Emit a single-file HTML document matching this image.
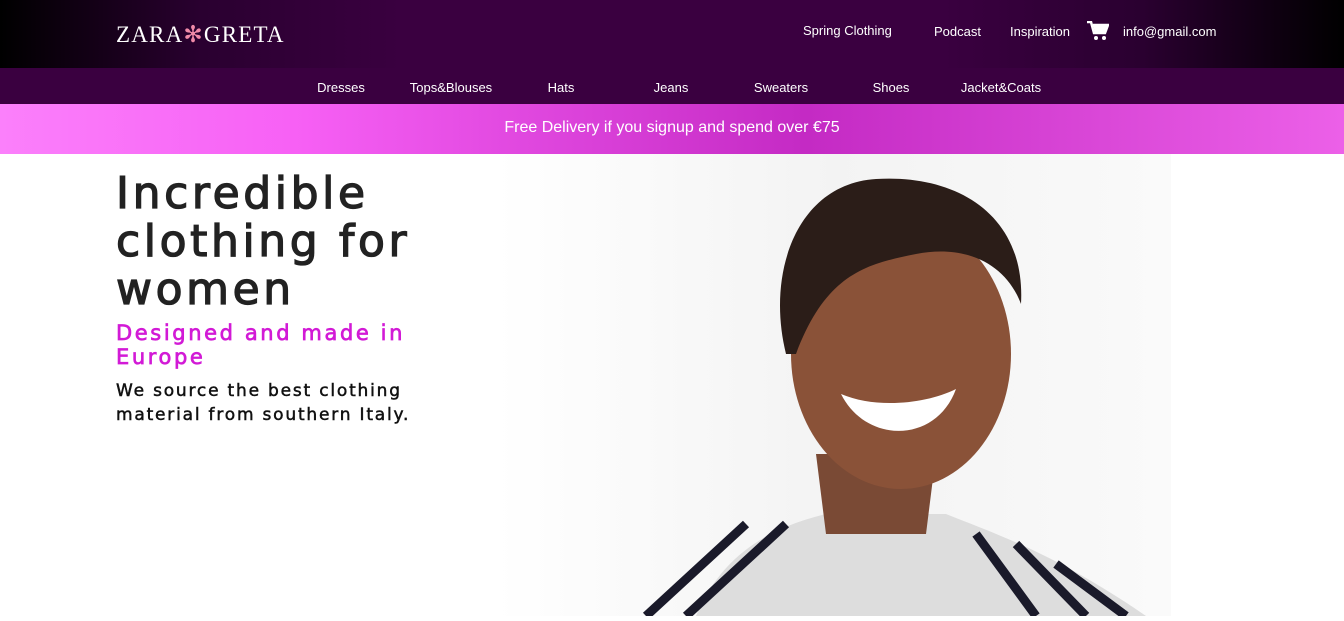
<!DOCTYPE html>
<html><head><style>
*{margin:0;padding:0;box-sizing:border-box}
body{width:1344px;height:616px;overflow:hidden;background:#fff;font-family:"Liberation Sans",sans-serif}
.top{height:68px;background:linear-gradient(90deg,#000 0%,#2a0030 15%,#3a0040 30%,#3a0040 70%,#2a0030 85%,#000 100%);position:relative;color:#fff}
.logo{position:absolute;left:116px;top:22px;font-family:"Liberation Serif",serif;font-size:23px;letter-spacing:1.2px}
.logo span{color:#f08aa8}
.tl{position:absolute;top:24px;font-size:13px}
.nav{height:36px;background:#3a0040;position:relative;color:#fff;font-size:13px}
.nav a{position:absolute;top:12px;transform:translateX(-50%)}
.ban{height:50px;background:linear-gradient(90deg,#fb80fb 0%,#f760f5 22%,#c42ac4 60%,#ec60e8 100%);color:#fff;text-align:center;font-size:16px;line-height:48px}
h1{position:absolute;left:116px;top:170px;font-size:44px;line-height:48px;color:#222;letter-spacing:3.6px;font-family:"DejaVu Sans",sans-serif;font-weight:normal;-webkit-text-stroke:1.3px #222}
h2{position:absolute;left:116px;top:321px;font-size:21px;line-height:24px;color:#d21ad6;font-family:"DejaVu Sans",sans-serif;font-weight:normal;-webkit-text-stroke:.7px #d21ad6;letter-spacing:2.6px}
p{position:absolute;left:116px;top:379px;font-size:17px;line-height:24px;color:#111;font-family:"DejaVu Sans",sans-serif;-webkit-text-stroke:.5px #111;letter-spacing:1.8px}
.img{position:absolute;left:496px;top:154px;width:675px;height:462px;background:linear-gradient(90deg,#fff,#f3f3f3 50%,#fafafa)}
</style></head><body>
<div class="top">
<div class="logo">ZARA<span>✻</span>GRETA</div>
<div class="tl" style="left:803px;top:23px">Spring Clothing</div>
<div class="tl" style="left:934px">Podcast</div>
<div class="tl" style="left:1010px">Inspiration</div>
<svg style="position:absolute;left:1087px;top:21px" width="22" height="20" viewBox="0 0 22 20"><path d="M0 1h4l3 11h11l3-8H6" fill="none" stroke="#fff" stroke-width="2.5"/><path d="M6 4h15l-3 8H8z" fill="#fff"/><circle cx="9" cy="17" r="2" fill="#fff"/><circle cx="17" cy="17" r="2" fill="#fff"/></svg>
<div class="tl" style="left:1123px">info@gmail.com</div>
</div>
<div class="nav">
<a style="left:341px">Dresses</a><a style="left:451px">Tops&amp;Blouses</a><a style="left:561px">Hats</a><a style="left:671px">Jeans</a><a style="left:781px">Sweaters</a><a style="left:891px">Shoes</a><a style="left:1001px">Jacket&amp;Coats</a>
</div>
<div class="ban">Free Delivery if you signup and spend over €75</div>
<h1>Incredible<br>clothing for<br>women</h1>
<h2>Designed and made in<br>Europe</h2>
<p>We source the best clothing<br>material from southern Italy.</p>
<div class="img">
<svg width="675" height="462" viewBox="0 0 675 462">
<path d="M200 462 C230 390 290 370 330 360 L450 360 C500 380 560 400 650 462Z" fill="#ddd"/>
<g stroke="#1a1a2a" stroke-width="9"><path d="M150 462 L250 370"/><path d="M190 462 L290 370"/><path d="M540 462 L480 380"/><path d="M590 462 L520 390"/><path d="M630 462 L560 410"/></g>
<path d="M320 300 L330 380 L430 380 L440 300Z" fill="#7a4a35"/>
<ellipse cx="405" cy="200" rx="110" ry="135" fill="#8a5238"/>
<path d="M290 200 C270 120 300 30 380 25 C460 20 530 60 525 150 C510 110 470 90 420 100 C370 110 330 120 300 200Z" fill="#2b1d18"/>
<path d="M345 240 C370 290 440 290 460 235 C430 250 380 255 345 240Z" fill="#fff"/>
</svg>
</div>
</body></html>
